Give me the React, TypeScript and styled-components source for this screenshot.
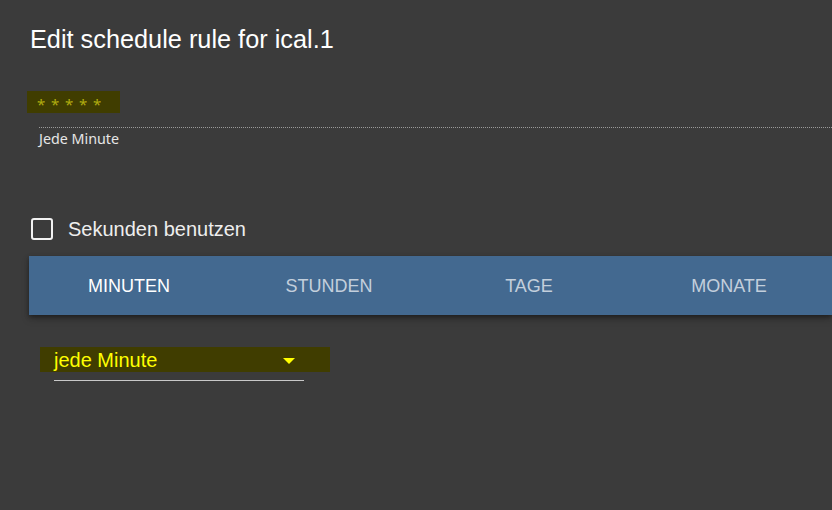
import React from 'react';
import styled, { createGlobalStyle } from 'styled-components';

const GlobalStyle = createGlobalStyle`
  html, body {
    margin: 0;
    background-color: #3b3b3b;
    overflow: hidden;
  }
`;

const tabs = ['Minuten', 'Stunden', 'Tage', 'Monate'];

const App: React.FC = () => {
  return (
    <>
      <GlobalStyle />
      <Page>
        <Title>Edit schedule rule for ical.1</Title>
        <StarsMark>
          {[0, 1, 2, 3, 4].map((i) => (
            <Star key={i}>*</Star>
          ))}
        </StarsMark>
        <Divider />
        <Hint>Jede Minute</Hint>
        <CheckRow>
          <CheckBox />
          <CheckLabel>Sekunden benutzen</CheckLabel>
        </CheckRow>
        <TabBar>
          {tabs.map((t, i) => (
            <Tab key={t} active={i === 0}>
              {t}
            </Tab>
          ))}
        </TabBar>
        <SelectMark>
          <SelectValue>jede Minute</SelectValue>
          <Arrow />
        </SelectMark>
        <Underline />
      </Page>
    </>
  );
};

const Page = styled.div`
  display: flex;
  flex-direction: column;
  align-items: flex-start;
  padding: 25px 0 0 29px;
  font-family: 'Liberation Sans', Arial, sans-serif;
`;

const Title = styled.h2`
  margin: 0 0 0 1px;
  font-size: 25.3px;
  line-height: 29px;
  font-weight: normal;
  color: #ffffff;
`;

const StarsMark = styled.div`
  display: flex;
  align-items: center;
  margin: 37px 0 0 -2px;
  padding-left: 10px;
  width: 83px;
  height: 22px;
  background-color: #403d00;
`;

const Star = styled.span`
  width: 14px;
  font-family: 'Noto Sans', sans-serif;
  font-size: 15px;
  line-height: 15px;
  padding-top: 5px;
  color: #b0ab10;
`;

const Divider = styled.div`
  align-self: stretch;
  margin: 14px 0 0 10px;
  border-top: 1px dotted #9a9a9a;
`;

const Hint = styled.div`
  margin: 2px 0 0 10px;
  font-family: 'Noto Sans', sans-serif;
  font-size: 14.3px;
  line-height: 18px;
  color: #e6e6e6;
`;

const CheckRow = styled.label`
  display: flex;
  align-items: center;
  gap: 15px;
  margin: 69px 0 0 2px;
  height: 24px;
`;

const CheckBox = styled.span`
  box-sizing: border-box;
  width: 22px;
  height: 22px;
  border: 2px solid #f2f2f2;
  border-radius: 3px;
`;

const CheckLabel = styled.span`
  font-size: 20px;
  color: #eeeeee;
`;

const TabBar = styled.div`
  display: flex;
  align-self: stretch;
  margin-top: 15px;
  height: 59px;
  overflow: hidden;
  background-color: #436990;
  box-shadow: 0 2px 4px rgba(0, 0, 0, 0.35), 0 4px 8px rgba(0, 0, 0, 0.2);
`;

const Tab = styled.div<{ active?: boolean }>`
  display: flex;
  align-items: center;
  justify-content: center;
  flex: 0 0 200px;
  padding-top: 2px;
  font-size: 18px;
  text-transform: uppercase;
  color: ${(p) => (p.active ? '#ffffff' : '#c3cfdc')};
`;

const SelectMark = styled.div`
  position: relative;
  display: flex;
  align-items: center;
  margin: 32px 0 0 11px;
  padding: 2px 0 0 14px;
  box-sizing: border-box;
  width: 290px;
  height: 25px;
  background-color: #403d00;
`;

const SelectValue = styled.span`
  font-size: 20px;
  color: #ffff00;
`;

const Arrow = styled.span`
  position: absolute;
  left: 243px;
  top: 11px;
  width: 0;
  height: 0;
  border-left: 6px solid transparent;
  border-right: 6px solid transparent;
  border-top: 6px solid #ffff00;
`;

const Underline = styled.div`
  margin: 8px 0 0 25px;
  width: 250px;
  height: 1px;
  background-color: #c8c8c8;
`;

export default App;
